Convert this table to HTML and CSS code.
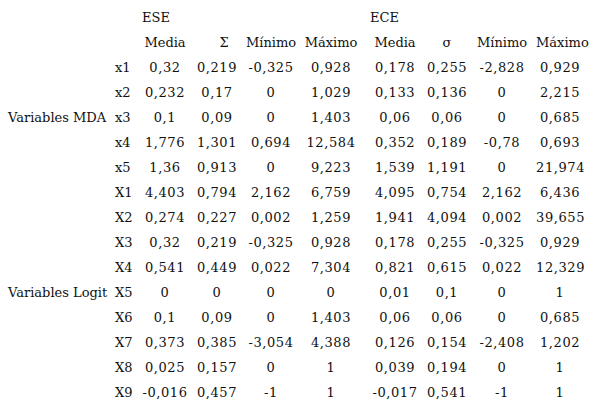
FILE: index.html
```html
<!DOCTYPE html>
<html lang="es">
<head>
<meta charset="utf-8">
<link rel="stylesheet" href="styles.css">
<title>Tabla</title>
</head>
<body>
<table class="stats">
<colgroup>
<col class="c-label"><col class="c-var"><col class="c-m1"><col class="c-s1"><col class="c-n1"><col class="c-x1"><col class="c-m2"><col class="c-s2"><col class="c-n2"><col class="c-x2">
</colgroup>
<tbody>
<tr class="hd"><td></td><td></td><td class="grp grp-ese" colspan="4">ESE</td><td class="grp grp-ece" colspan="4">ECE</td></tr>
<tr class="hd"><td></td><td></td><td>Media</td><td class="sig">Σ</td><td>Mínimo</td><td>Máximo</td><td>Media</td><td>σ</td><td>Mínimo</td><td>Máximo</td></tr>
<tr><td></td><td class="v">x1</td><td>0,32</td><td>0,219</td><td>-0,325</td><td>0,928</td><td>0,178</td><td>0,255</td><td>-2,828</td><td>0,929</td></tr>
<tr><td></td><td class="v">x2</td><td>0,232</td><td>0,17</td><td>0</td><td>1,029</td><td>0,133</td><td>0,136</td><td>0</td><td>2,215</td></tr>
<tr><td class="lbl">Variables MDA</td><td class="v">x3</td><td>0,1</td><td>0,09</td><td>0</td><td>1,403</td><td>0,06</td><td>0,06</td><td>0</td><td>0,685</td></tr>
<tr><td></td><td class="v">x4</td><td>1,776</td><td>1,301</td><td>0,694</td><td>12,584</td><td>0,352</td><td>0,189</td><td>-0,78</td><td>0,693</td></tr>
<tr><td></td><td class="v">x5</td><td>1,36</td><td>0,913</td><td>0</td><td>9,223</td><td>1,539</td><td>1,191</td><td>0</td><td>21,974</td></tr>
<tr><td></td><td class="v">X1</td><td>4,403</td><td>0,794</td><td>2,162</td><td>6,759</td><td>4,095</td><td>0,754</td><td>2,162</td><td>6,436</td></tr>
<tr><td></td><td class="v">X2</td><td>0,274</td><td>0,227</td><td>0,002</td><td>1,259</td><td>1,941</td><td>4,094</td><td>0,002</td><td>39,655</td></tr>
<tr><td></td><td class="v">X3</td><td>0,32</td><td>0,219</td><td>-0,325</td><td>0,928</td><td>0,178</td><td>0,255</td><td>-0,325</td><td>0,929</td></tr>
<tr><td></td><td class="v">X4</td><td>0,541</td><td>0,449</td><td>0,022</td><td>7,304</td><td>0,821</td><td>0,615</td><td>0,022</td><td>12,329</td></tr>
<tr><td class="lbl">Variables Logit</td><td class="v">X5</td><td>0</td><td>0</td><td>0</td><td>0</td><td>0,01</td><td>0,1</td><td>0</td><td>1</td></tr>
<tr><td></td><td class="v">X6</td><td>0,1</td><td>0,09</td><td>0</td><td>1,403</td><td>0,06</td><td>0,06</td><td>0</td><td>0,685</td></tr>
<tr><td></td><td class="v">X7</td><td>0,373</td><td>0,385</td><td>-3,054</td><td>4,388</td><td>0,126</td><td>0,154</td><td>-2,408</td><td>1,202</td></tr>
<tr><td></td><td class="v">X8</td><td>0,025</td><td>0,157</td><td>0</td><td>1</td><td>0,039</td><td>0,194</td><td>0</td><td>1</td></tr>
<tr><td></td><td class="v">X9</td><td>-0,016</td><td>0,457</td><td>-1</td><td>1</td><td>-0,017</td><td>0,541</td><td>-1</td><td>1</td></tr>
</tbody>
</table>
</body>
</html>
```

FILE: styles.css
```css
html, body {
  margin: 0;
  padding: 0;
  background: #ffffff;
}

body {
  padding: 5px 0 0 8px;
  font-family: "DejaVu Serif", "Liberation Serif", serif;
  font-size: 13px;
  color: #111111;
}

.stats {
  border-collapse: collapse;
  table-layout: fixed;
  width: 576px;
}

.stats td {
  height: 25px;
  padding: 0;
  text-align: center;
  vertical-align: middle;
  white-space: nowrap;
  letter-spacing: 0.6px;
}

.stats tr.hd td,
.stats td.lbl,
.stats td.v {
  letter-spacing: 0;
}

.c-label { width: 104px; }
.c-var { width: 28px; }
.c-m1 { width: 50px; }
.c-s1 { width: 54px; }
.c-n1 { width: 54px; }
.c-x1 { width: 66px; }
.c-m2 { width: 62px; }
.c-s2 { width: 42px; }
.c-n2 { width: 68px; }
.c-x2 { width: 48px; }

.stats td.lbl {
  text-align: left;
}

.stats td.v {
  text-align: left;
  padding-left: 3px;
}

.stats td.grp {
  text-align: left;
}

.stats td.grp-ese {
  padding-left: 2px;
}

.stats td.grp-ece {
  padding-left: 6px;
}

.stats td.sig {
  padding-left: 14px;
}
```
